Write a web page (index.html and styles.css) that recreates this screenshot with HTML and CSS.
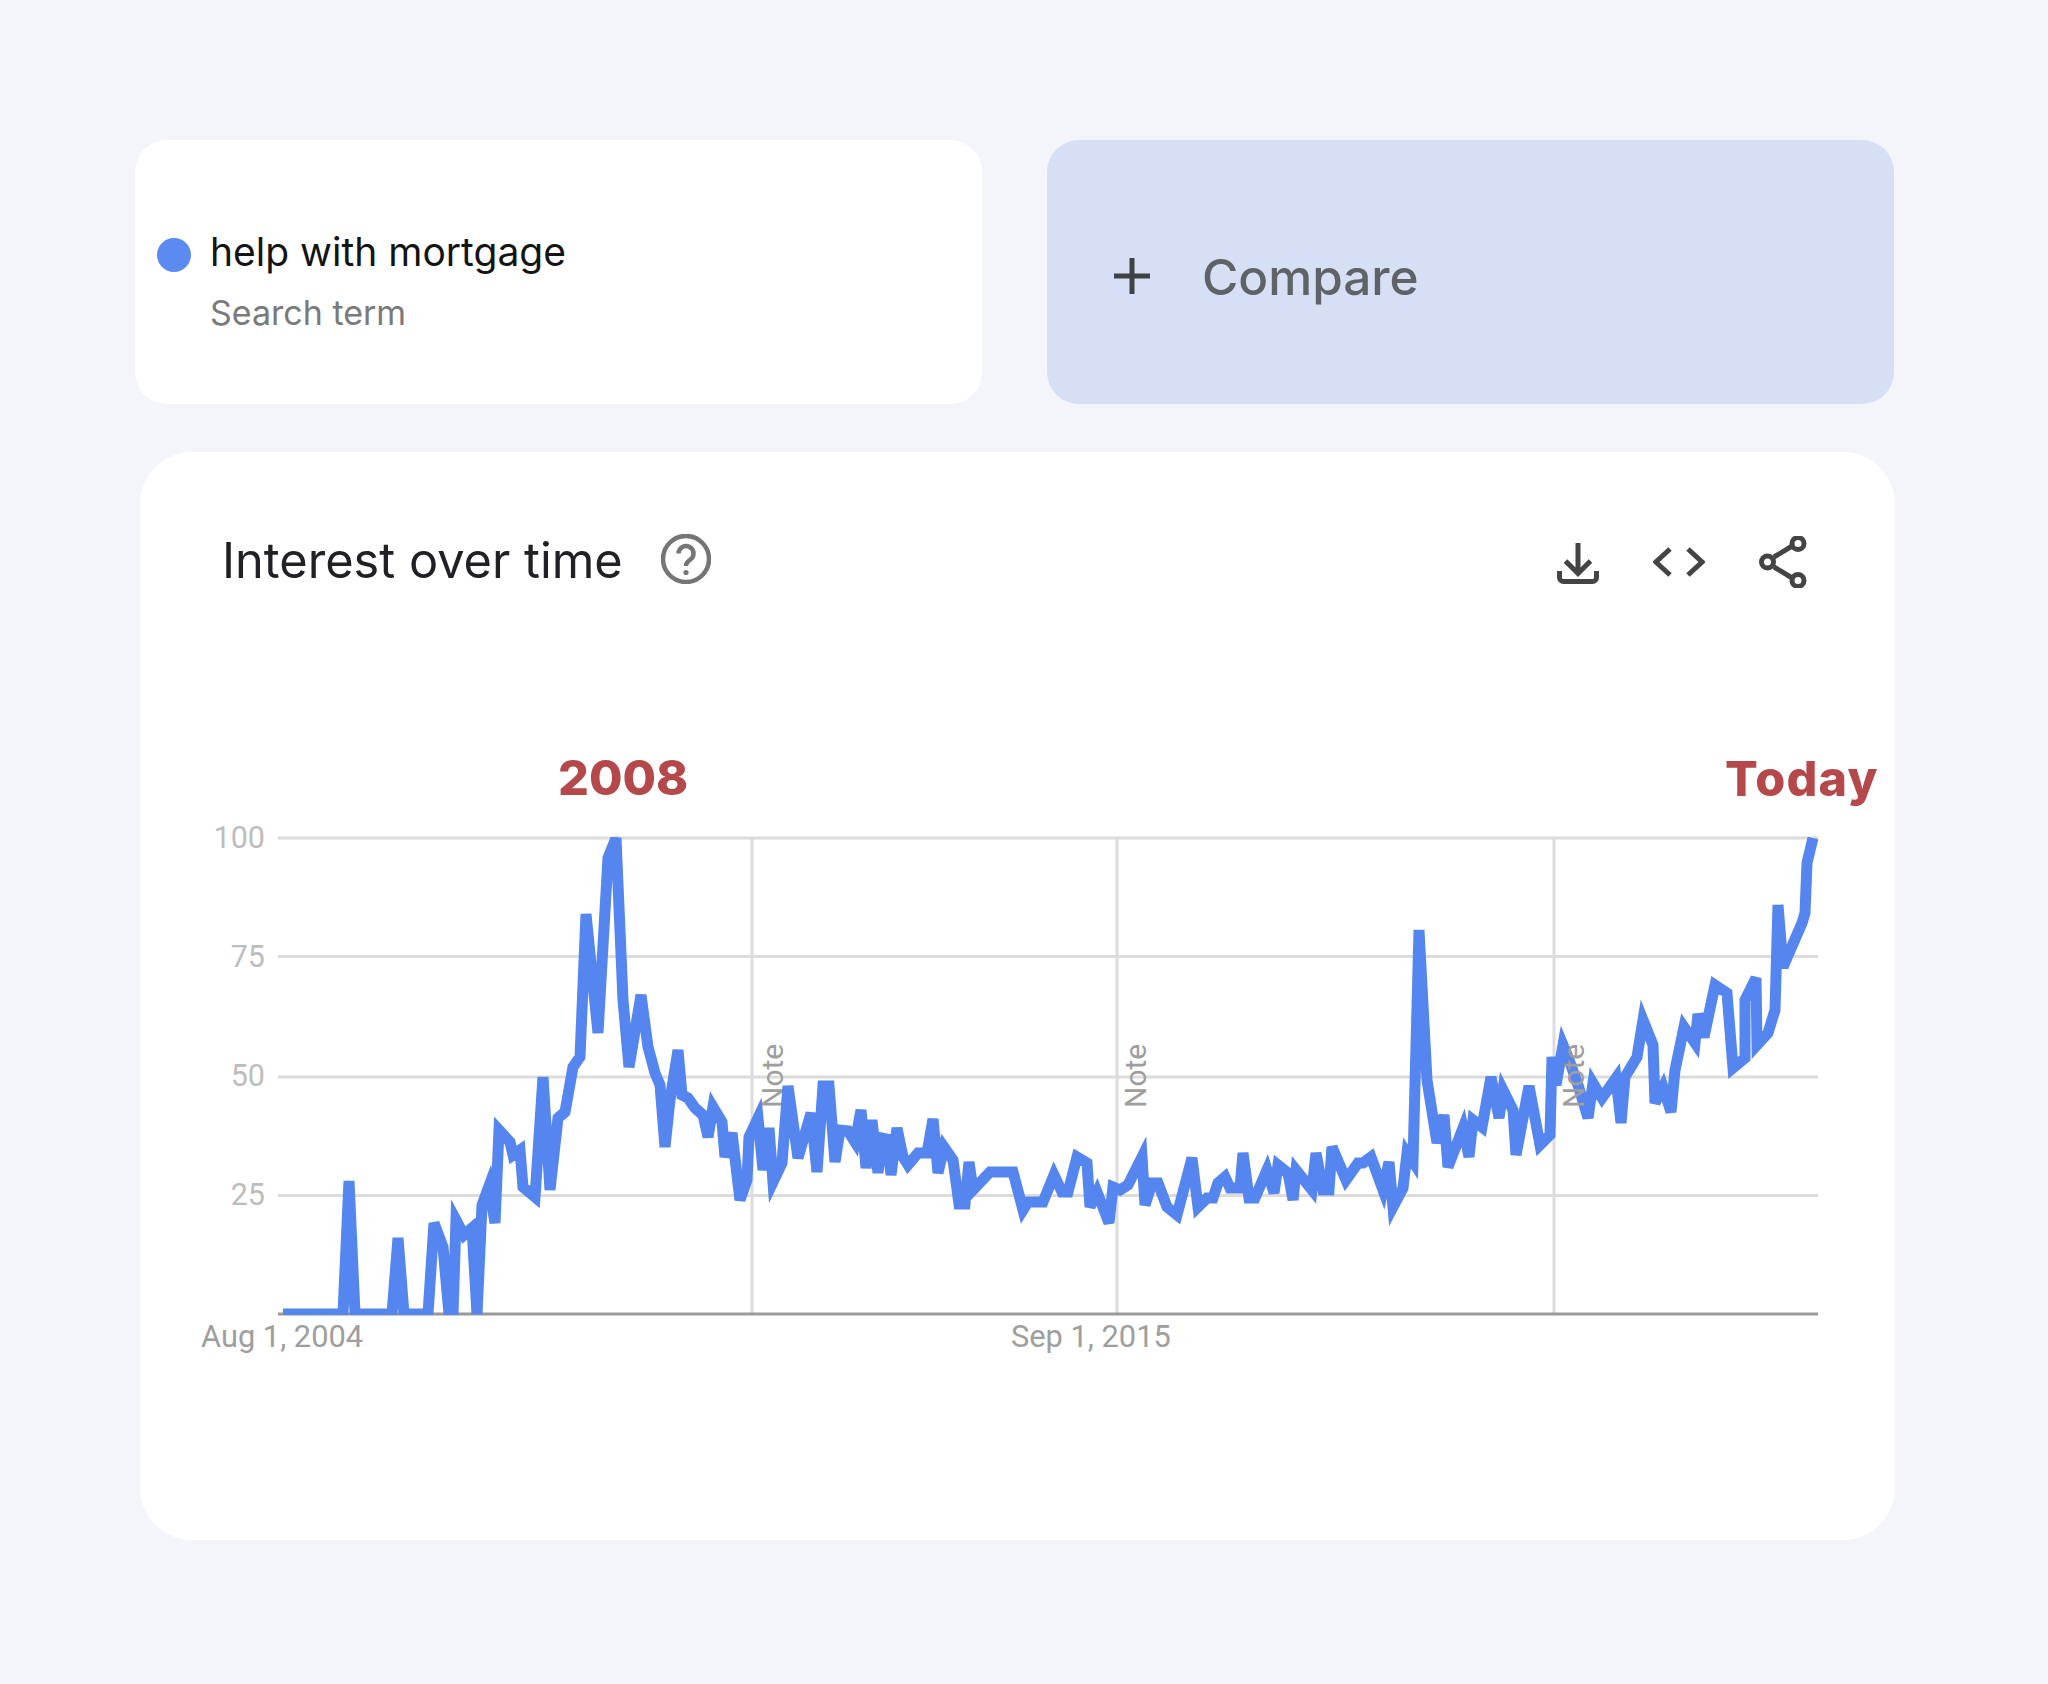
FILE: index.html
```html
<!DOCTYPE html>
<html lang="en">
<head>
<meta charset="utf-8">
<title>Interest over time</title>
<link rel="stylesheet" href="styles.css">
</head>
<body>
<main class="page">
  <section class="top-row">
    <div class="term-card">
      <span class="term-dot"></span>
      <div class="term-text">
        <div class="term-name">help with mortgage</div>
        <div class="term-type">Search term</div>
      </div>
    </div>
    <div class="compare-card">
      <svg class="plus-icon" viewBox="0 0 38 38"><path d="M19 1v36M1 19h36"/></svg>
      <span class="compare-label">Compare</span>
    </div>
  </section>
  <section class="chart-card">
    <header class="chart-head">
      <div class="chart-title-wrap">
        <h1 class="chart-title">Interest over time</h1>
        <svg class="help-icon" viewBox="0 0 50 50">
          <circle cx="25" cy="25" r="23" class="help-ring"/>
          <path d="M17.500 19.500a7.500 7.500 0 1 1 11.500 6.400c-2.600 1.700-4 3-4 6.100" class="help-q"/>
          <circle cx="25" cy="38.500" r="2.600" class="help-dot"/>
        </svg>
      </div>
      <div class="chart-tools">
        <svg class="tool tool-dl" viewBox="0 0 42 42"><path d="M21 1v29M8.500 19 21 31.500 33.500 19M2.500 29v6.500a4 4 0 0 0 4 4h29a4 4 0 0 0 4-4V29"/></svg>
        <svg class="tool tool-code" viewBox="0 0 52 32"><path d="M17 3 3 16l14 13M35 3l14 13-14 13"/></svg>
        <svg class="tool tool-share" viewBox="0 0 48 52">
          <path d="M15 21 34 9.500M15 31 34 42.500"/>
          <circle cx="8.500" cy="26" r="6"/><circle cx="39" cy="7.500" r="6"/><circle cx="39" cy="44.500" r="6"/>
        </svg>
      </div>
    </header>
    <svg class="plot" viewBox="140 700 1755 680" role="img" aria-label="Interest over time chart">
      <defs><clipPath id="plot-clip"><rect x="270" y="837" width="1548.500" height="478"/></clipPath></defs>
      <text class="callout" x="558" y="795">2008</text>
      <text class="callout callout-today" x="1725" y="796">Today</text>
      <g class="grid">
        <path d="M278 838H1818M278 956.500H1818M278 1077H1818M278 1195.500H1818"/>
        <path d="M752 838V1314M1117 838V1314M1554 838V1314"/>
      </g>
      <path class="baseline" d="M278 1314H1818"/>
      <g class="axis-y">
        <text x="265" y="848">100</text>
        <text x="265" y="967">75</text>
        <text x="265" y="1086">50</text>
        <text x="265" y="1205">25</text>
      </g>
      <text class="axis-x" x="201" y="1347">Aug 1, 2004</text>
      <text class="axis-x" x="1011" y="1347">Sep 1, 2015</text>
      <text class="note" transform="translate(783 1108) rotate(-90)">Note</text>
      <text class="note" transform="translate(1146 1108) rotate(-90)">Note</text>
      <polyline class="trend" clip-path="url(#plot-clip)" points="283,1314 343,1314 349,1181 355,1314 392,1314 398,1238 404,1314 428,1314 434,1223 443,1247 449,1314 453,1314 456,1220 464,1235 472,1228 477,1314 482,1205 489,1186 495,1223 499,1130 510,1142 513,1155 520,1150 523,1187 535,1197 543,1077 550,1190 558,1118 565,1112 573,1067 580,1057 586,914 598,1033 608,858 616,838 623,1000 629,1067 641,995 648,1047 655,1073 660,1085 665,1147 670,1100 678,1050 682,1095 688,1098 695,1108 703,1115 708,1137 713,1107 722,1122 725,1157 732,1133 740,1200 747,1180 749,1137 758,1118 763,1170 769,1128 773,1182 782,1163 788,1086 798,1158 811,1113 817,1172 823,1086 829,1086 835,1162 840,1130 848,1131 855,1142 861,1110 866,1168 872,1120 878,1173 882,1138 887,1139 891,1175 897,1128 903,1157 908,1165 918,1153 927,1153 933,1119 938,1173 944,1147 953,1160 959,1204 965,1204 969,1162 973,1190 990,1172 1013,1172 1023,1210 1028,1202 1043,1202 1054,1175 1062,1192 1068,1192 1077,1157 1087,1163 1090,1207 1097,1192 1109,1223 1113,1187 1120,1190 1128,1185 1142,1157 1145,1205 1152,1183 1158,1183 1167,1207 1177,1215 1192,1158 1198,1207 1207,1198 1213,1198 1218,1183 1225,1177 1230,1188 1240,1188 1243,1153 1249,1198 1255,1198 1267,1170 1274,1193 1278,1165 1288,1173 1293,1200 1296,1170 1312,1190 1316,1153 1323,1190 1329,1190 1332,1147 1346,1180 1358,1163 1363,1163 1371,1157 1383,1190 1389,1162 1393,1207 1403,1188 1407,1153 1413,1162 1419,930 1427,1080 1437,1143 1444,1115 1448,1167 1463,1128 1469,1157 1473,1120 1482,1127 1491,1077 1499,1118 1503,1090 1513,1110 1516,1155 1529,1086 1540,1145 1550,1135 1552,1057 1556,1085 1563,1045 1568,1057 1578,1085 1588,1118 1593,1083 1602,1098 1616,1078 1621,1123 1625,1077 1637,1057 1643,1020 1653,1045 1655,1103 1663,1087 1671,1112 1675,1070 1684,1027 1695,1043 1698,1014 1704,1037 1715,985 1727,993 1733,1068 1745,1058 1745,1000 1756,978 1757,1045 1768,1033 1775,1010 1778,905 1783,967 1802,923 1805,913 1807,863 1813,838"/>
      <text class="note" transform="translate(1584 1108) rotate(-90)">Note</text>
    </svg>
  </section>
</main>
</body>
</html>
```
FILE: styles.css
```css
* { box-sizing: border-box; }
html, body { margin: 0; padding: 0; }
body {
  width: 2048px;
  height: 1684px;
  background: #f3f5fa;
  font-family: "Open Sans", "Liberation Sans", sans-serif;
  overflow: hidden;
}
.page {
  display: flex;
  flex-direction: column;
  gap: 48px;
  padding: 140px 153px 0 135px;
}
.top-row {
  display: grid;
  grid-template-columns: 847px 847px;
  gap: 65px;
}
.term-card, .compare-card {
  height: 264px;
  border-radius: 32px;
  display: flex;
}
.term-card {
  background: #fff;
  padding: 89px 0 0 22px;
  gap: 19px;
}
.term-dot {
  width: 34px;
  height: 34px;
  margin-top: 9px;
  border-radius: 50%;
  background: #5b8af0;
  flex: none;
}
.term-name {
  font-family: Inter, sans-serif;
  font-size: 39px;
  line-height: 46px;
  color: #141414;
}
.term-type {
  font-family: Inter, sans-serif;
  font-size: 34px;
  line-height: 40px;
  color: #7a7a7a;
  margin-top: 18px;
}
.compare-card {
  background: #d6dff3;
  align-items: center;
  padding: 8px 0 0 66px;
  gap: 51px;
}
.plus-icon {
  width: 38px;
  height: 38px;
  flex: none;
  fill: none;
  stroke: #3f4346;
  stroke-width: 5;
}
.compare-label {
  font-family: Inter, sans-serif;
  font-size: 49.500px;
  font-weight: 500;
  color: #5f6368;
  margin-top: 2px;
}
.chart-card {
  width: 1755px;
  height: 1088px;
  margin-left: 5px;
  background: #fff;
  border-radius: 52px;
  display: flex;
  flex-direction: column;
}
.chart-head {
  display: flex;
  justify-content: space-between;
  align-items: flex-start;
  height: 248px;
  padding: 78px 88px 0 82px;
}
.chart-title-wrap {
  display: flex;
  align-items: center;
  gap: 38px;
}
.chart-title {
  margin: 0;
  font-family: Inter, sans-serif;
  font-size: 48.700px;
  font-weight: 400;
  line-height: 62px;
  color: #202124;
}
.help-icon {
  width: 50px;
  height: 50px;
  flex: none;
  margin-top: -5px;
}
.help-ring, .help-q {
  fill: none;
  stroke: #757575;
  stroke-width: 4.500;
}
.help-dot { fill: #757575; }
.chart-tools {
  display: flex;
  align-items: center;
  gap: 54px;
  margin-top: 6px;
}
.tool {
  flex: none;
  fill: none;
  stroke: #444;
  stroke-width: 5;
}
.tool-dl { width: 42px; height: 42px; margin-top: 2px; }
.tool-code { width: 52px; height: 32px; }
.tool-share { width: 48px; height: 52px; }
.plot {
  width: 1755px;
  height: 680px;
  display: block;
}
.callout {
  font-family: Inter, sans-serif;
  font-size: 48.500px;
  font-weight: 800;
  fill: #b4484b;
}
.callout-today { letter-spacing: 1.200px; }
.grid path {
  fill: none;
  stroke: #dcdcdc;
  stroke-width: 3;
}
.baseline {
  fill: none;
  stroke: #9a9a9a;
  stroke-width: 3;
}
.axis-y text {
  font-family: Roboto, sans-serif;
  font-size: 30.500px;
  fill: #bdbdbd;
  text-anchor: end;
}
.axis-x {
  font-family: Roboto, sans-serif;
  font-size: 30.800px;
  fill: #9e9e9e;
}
.note {
  font-family: Roboto, sans-serif;
  font-size: 30px;
  fill: #9e9e9e;
}
.trend {
  fill: none;
  stroke: #5585ee;
  stroke-width: 11;
  stroke-linejoin: miter;
  stroke-miterlimit: 4;
}
```
